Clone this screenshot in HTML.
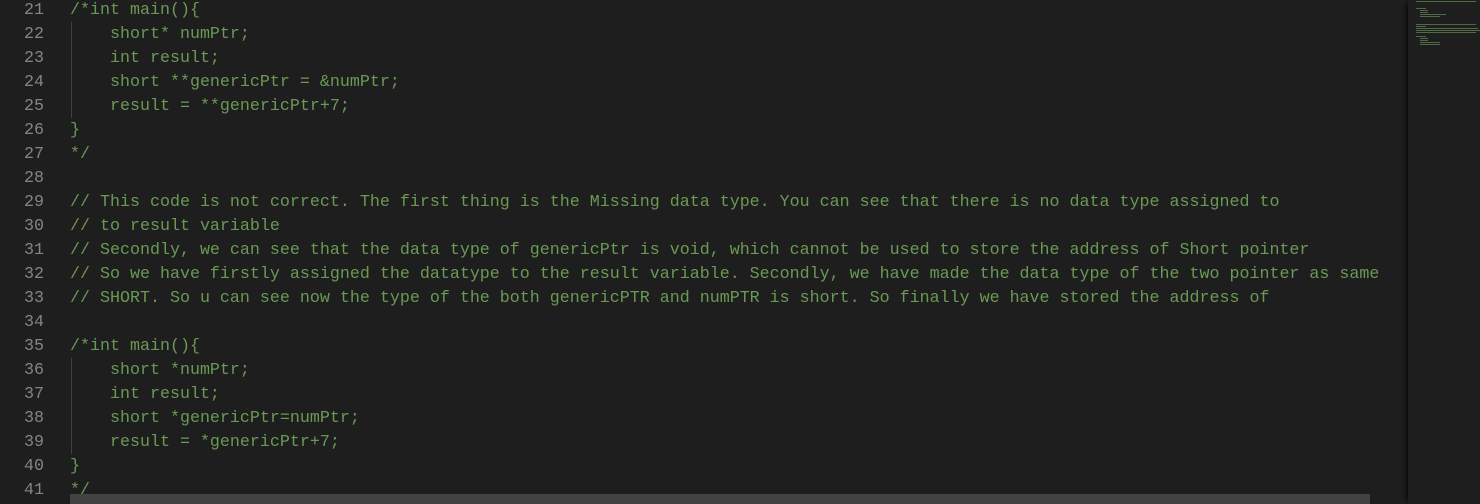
<!DOCTYPE html>
<html><head><style>
body{margin:0;width:1480px;height:504px;background:#1e1e1e;overflow:hidden;position:relative;font-family:"Liberation Mono",monospace;font-size:16.67px;}
.l{position:absolute;left:0;height:24px;line-height:24px;white-space:pre;width:1400px}
.n{position:absolute;left:0;width:44px;text-align:right;color:#858585}
.c{position:absolute;left:70px;color:#6a9955}
.g{position:absolute;left:71px;width:1px;background:#404040}
.mm{position:absolute;left:1408px;top:0;width:72px;height:504px;background:#1e1e1e;box-shadow:-4px 0 5px -3px #000}
.sb{position:absolute;left:70px;top:494px;width:1300px;height:10px;background:#424242}
.m{position:absolute;height:1px;background:#4f6b43;left:1416px}
</style></head><body>
<div class="g" style="top:22px;height:96px"></div>
<div class="g" style="top:358px;height:96px"></div>
<div class="l" style="top:-1px"><span class="n">21</span><span class="c">/*int main(){</span></div>
<div class="l" style="top:23px"><span class="n">22</span><span class="c">    short* numPtr;</span></div>
<div class="l" style="top:47px"><span class="n">23</span><span class="c">    int result;</span></div>
<div class="l" style="top:71px"><span class="n">24</span><span class="c">    short **genericPtr = &amp;numPtr;</span></div>
<div class="l" style="top:95px"><span class="n">25</span><span class="c">    result = **genericPtr+7;</span></div>
<div class="l" style="top:119px"><span class="n">26</span><span class="c">}</span></div>
<div class="l" style="top:143px"><span class="n">27</span><span class="c">*/</span></div>
<div class="l" style="top:167px"><span class="n">28</span></div>
<div class="l" style="top:191px"><span class="n">29</span><span class="c">// This code is not correct. The first thing is the Missing data type. You can see that there is no data type assigned to</span></div>
<div class="l" style="top:215px"><span class="n">30</span><span class="c">// to result variable</span></div>
<div class="l" style="top:239px"><span class="n">31</span><span class="c">// Secondly, we can see that the data type of genericPtr is void, which cannot be used to store the address of Short pointer</span></div>
<div class="l" style="top:263px"><span class="n">32</span><span class="c">// So we have firstly assigned the datatype to the result variable. Secondly, we have made the data type of the two pointer as same</span></div>
<div class="l" style="top:287px"><span class="n">33</span><span class="c">// SHORT. So u can see now the type of the both genericPTR and numPTR is short. So finally we have stored the address of</span></div>
<div class="l" style="top:311px"><span class="n">34</span></div>
<div class="l" style="top:335px"><span class="n">35</span><span class="c">/*int main(){</span></div>
<div class="l" style="top:359px"><span class="n">36</span><span class="c">    short *numPtr;</span></div>
<div class="l" style="top:383px"><span class="n">37</span><span class="c">    int result;</span></div>
<div class="l" style="top:407px"><span class="n">38</span><span class="c">    short *genericPtr=numPtr;</span></div>
<div class="l" style="top:431px"><span class="n">39</span><span class="c">    result = *genericPtr+7;</span></div>
<div class="l" style="top:455px"><span class="n">40</span><span class="c">}</span></div>
<div class="l" style="top:479px"><span class="n">41</span><span class="c">*/</span></div>
<div class="mm"></div>
<div class="m" style="top:1px;width:60px"></div>
<div class="m" style="top:8px;width:10px"></div>
<div class="m" style="top:10px;width:8px;left:1420px"></div>
<div class="m" style="top:12px;width:8px;left:1420px"></div>
<div class="m" style="top:14px;width:26px;left:1420px"></div>
<div class="m" style="top:16px;width:20px;left:1420px"></div>
<div class="m" style="top:24px;width:60px"></div>
<div class="m" style="top:26px;width:10px"></div>
<div class="m" style="top:28px;width:62px"></div>
<div class="m" style="top:30px;width:64px"></div>
<div class="m" style="top:32px;width:60px"></div>
<div class="m" style="top:36px;width:10px"></div>
<div class="m" style="top:38px;width:8px;left:1420px"></div>
<div class="m" style="top:40px;width:8px;left:1420px"></div>
<div class="m" style="top:42px;width:20px;left:1420px"></div>
<div class="m" style="top:44px;width:20px;left:1420px"></div>
<div class="sb"></div>
</body></html>
